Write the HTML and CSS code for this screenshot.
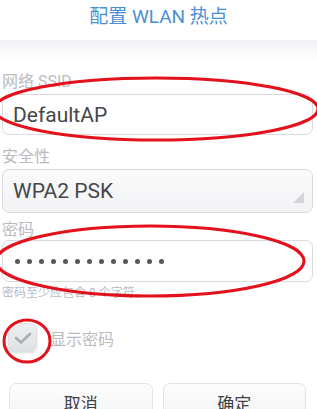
FILE: index.html
```html
<!DOCTYPE html>
<html lang="zh-CN">
<head>
  <meta charset="UTF-8">
  <title>配置 WLAN 热点</title>
  <link rel="stylesheet" href="styles.css">
</head>
<body>

<div class="dialog">
  <h1 class="title">配置 WLAN 热点</h1>

  <div class="form">
    <label class="field-label">网络 SSID</label>
    <div class="input ssid">DefaultAP</div>

    <label class="field-label">安全性</label>
    <div class="select">
      <span>WPA2 PSK</span>
      <span class="corner"></span>
    </div>

    <label class="field-label pw-label">密码</label>
    <div class="input password">
      <span class="dot"></span><span class="dot"></span><span class="dot"></span><span class="dot"></span><span class="dot"></span><span class="dot"></span><span class="dot"></span><span class="dot"></span><span class="dot"></span><span class="dot"></span><span class="dot"></span><span class="dot"></span><span class="dot"></span>
    </div>
    <div class="hint">密码至少应包含 8 个字符。</div>

    <div class="check-row">
      <span class="checkbox">
        <svg width="18" height="14" viewBox="0 0 18 14"><path d="M2 7 L7 11.5 L16 3" fill="none" stroke="#a9acb1" stroke-width="2.6" stroke-linecap="round" stroke-linejoin="round"/></svg>
      </span>
      <span class="check-label">显示密码</span>
    </div>

    <div class="buttons">
      <button class="btn">取消</button>
      <button class="btn">确定</button>
    </div>
  </div>

  <!-- red annotation marks -->
  <svg class="marks" width="317" height="409" viewBox="0 0 317 409">
    <ellipse cx="156" cy="109" rx="162" ry="31" fill="none" stroke="#e3111c" stroke-width="3"/>
    <ellipse cx="150" cy="261" rx="154" ry="35" fill="none" stroke="#e3111c" stroke-width="3"/>
    <ellipse cx="27" cy="341" rx="23" ry="21" fill="none" stroke="#e3111c" stroke-width="3"/>
  </svg>
</div>

</body>
</html>
```

FILE: styles.css
```css
* {
  box-sizing: border-box;
}

body {
  margin: 0;
  background: #fff;
  font-family: Roboto, "Noto Sans CJK SC", sans-serif;
}

.dialog {
  position: relative;
  width: 317px;
  height: 409px;
  overflow: hidden;
}

.title {
  margin: 0;
  height: 40px;
  padding-top: 3px;
  line-height: 27px;
  text-align: center;
  font-size: 19px;
  font-weight: normal;
  color: #4a8fd6;
}

.form {
  padding: 32px 4px 0 2px;
  background: linear-gradient(#f1f2f4 0, #fff 22px);
}

.field-label {
  display: block;
  font-size: 16px;
  line-height: 20px;
  color: #b9bbbf;
  margin-bottom: 2px;
}

.input,
.select {
  height: 41px;
  border: 1px solid #d9dbde;
  border-radius: 7px;
  padding: 0 10px;
  display: flex;
  align-items: center;
  font-size: 21px;
  color: #45474b;
  margin-bottom: 12px;
  background: #fff;
}

.select {
  position: relative;
  height: 44px;
  margin-bottom: 7px;
  background: linear-gradient(#fbfbfc, #f1f2f4);
}

.select .corner {
  position: absolute;
  right: 8px;
  bottom: 9px;
  width: 0;
  height: 0;
  border-left: 11px solid transparent;
  border-bottom: 11px solid #d3d5d9;
}

.pw-label {
  margin-bottom: 0;
}

.password {
  height: 42px;
  gap: 7px;
  padding-left: 12px;
  margin-bottom: 3px;
}

.dot {
  width: 5px;
  height: 5px;
  border-radius: 50%;
  background: #55585d;
}

.hint {
  font-size: 12px;
  color: #b9bbbf;
  line-height: 16px;
}

.check-row {
  display: flex;
  align-items: center;
  margin-top: 22px;
  padding-left: 6px;
}

.checkbox {
  width: 29px;
  height: 29px;
  border-radius: 7px;
  border: 1px solid #dcdee1;
  background: linear-gradient(#eceef0, #dfe1e4);
  display: flex;
  align-items: center;
  justify-content: center;
  box-shadow: 0 1px 2px rgba(0,0,0,0.15);
}

.check-label {
  margin-left: 13px;
  font-size: 16px;
  color: #b9bbbf;
}

.buttons {
  display: flex;
  gap: 10px;
  padding: 0 7px;
  margin-top: 31px;
}

.btn {
  flex: 1;
  height: 40px;
  border: 1px solid #e1e3e6;
  border-radius: 7px;
  background: linear-gradient(#fdfdfd, #f1f2f4);
  font-family: Roboto, "Noto Sans CJK SC", sans-serif;
  font-size: 17px;
  color: #3e4044;
  padding: 0;
  padding-bottom: 2px;
}

.marks {
  position: absolute;
  left: 0;
  top: 0;
  pointer-events: none;
}
```
